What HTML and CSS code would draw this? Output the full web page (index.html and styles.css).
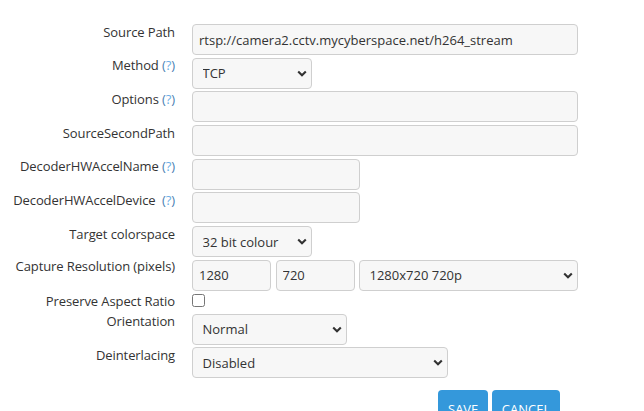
FILE: index.html
```html
<!DOCTYPE html>
<html lang="en">
<head>
<meta charset="utf-8">
<title>Source</title>
<link rel="stylesheet" href="styles.css">
</head>
<body>
<form class="form">
  <div class="grid">
    <label class="lbl">Source Path</label>
    <div class="ctl"><input class="field w-full" type="text" value="rtsp://camera2.cctv.mycyberspace.net/h264_stream"></div>

    <label class="lbl">Method <span class="help">(<b>?</b>)</span></label>
    <div class="ctl"><select class="field sel w-120"><option>TCP</option></select></div>

    <label class="lbl">Options <span class="help">(<b>?</b>)</span></label>
    <div class="ctl"><input class="field w-full" type="text" value=""></div>

    <label class="lbl">SourceSecondPath</label>
    <div class="ctl"><input class="field w-full" type="text" value=""></div>

    <label class="lbl">DecoderHWAccelName <span class="help">(<b>?</b>)</span></label>
    <div class="ctl"><input class="field w-168" type="text" value=""></div>

    <label class="lbl">DecoderHWAccelDevice&nbsp; <span class="help">(<b>?</b>)</span></label>
    <div class="ctl"><input class="field w-168" type="text" value=""></div>

    <label class="lbl">Target colorspace</label>
    <div class="ctl"><select class="field sel w-120"><option>32 bit colour</option></select></div>

    <label class="lbl lbl-tight">Capture Resolution (pixels)</label>
    <div class="ctl res">
      <input class="field w-79" type="text" value="1280">
      <input class="field w-79" type="text" value="720">
      <select class="field sel w-219"><option>1280x720 720p</option></select>
    </div>

    <label class="lbl">Preserve Aspect Ratio</label>
    <div class="ctl check-row"><span class="check"></span></div>

    <label class="lbl">Orientation</label>
    <div class="ctl"><select class="field sel w-155"><option>Normal</option></select></div>

    <label class="lbl">Deinterlacing</label>
    <div class="ctl"><select class="field sel w-256"><option>Disabled</option></select></div>
  </div>
  <div class="buttons">
    <button type="button" class="btn">Save</button>
    <button type="button" class="btn">Cancel</button>
  </div>
</form>
</body>
</html>
```

FILE: styles.css
```css
html, body {
  margin: 0;
  padding: 0;
  background: #ffffff;
  overflow: hidden;
}

body {
  font-family: "Open Sans", "Liberation Sans", sans-serif;
  font-size: 13px;
  color: #333333;
}

.form {
  padding-top: 24px;
}

.grid {
  display: grid;
  grid-template-columns: 175px auto;
  column-gap: 17px;
  row-gap: 2.7px;
  align-items: start;
}

.lbl {
  text-align: right;
  white-space: nowrap;
  line-height: 17.7px;
  margin-top: -0.3px;
  color: #333333;
  letter-spacing: -0.1px;
}

.lbl-tight {
  margin-top: -2px;
}

.help {
  color: #4a7fb3;
}

.help b {
  font-weight: normal;
  color: #6aaee6;
}

.ctl {
  display: flex;
  align-items: flex-start;
}

.res {
  gap: 4.5px;
}

.field {
  box-sizing: border-box;
  height: 31px;
  margin: 0;
  border: 1px solid #cfcfcf;
  border-radius: 4px;
  background-color: #f7f7f7;
  font-family: "Open Sans", "Liberation Sans", sans-serif;
  font-size: 13px;
  color: #333333;
  padding: 0 6px;
  outline: none;
}

.sel {
  -webkit-appearance: none;
  appearance: none;
  padding-left: 9.5px;
  padding-right: 20px;
  background-image: url("data:image/svg+xml;utf8,<svg xmlns='http://www.w3.org/2000/svg' width='10' height='7' viewBox='0 0 10 7'><path d='M1.2 1.4 L5 5.2 L8.8 1.4' fill='none' stroke='%23333' stroke-width='2.1'/></svg>");
  background-repeat: no-repeat;
  background-position: right 4px center;
  background-size: 10px 7px;
}

.w-full { width: 386px; }
.w-120 { width: 120px; }
.w-168 { width: 168px; }
.w-79 { width: 79px; }
.w-219 { width: 218.5px; }
.w-155 { width: 155px; }
.w-256 { width: 256px; }

.check-row {
  height: 17.6px;
}

.check {
  box-sizing: border-box;
  display: block;
  width: 13px;
  height: 13px;
  margin-top: 0.5px;
  border: 1px solid #767676;
  border-radius: 2.5px;
  background: #ffffff;
}

.buttons {
  display: flex;
  gap: 3.5px;
  padding-left: 438px;
  margin-top: 11.5px;
}

.btn {
  box-sizing: border-box;
  height: 36px;
  padding: 4px 10px 0;
  border: none;
  border-radius: 4px;
  background: #3498db;
  color: #ffffff;
  font-family: "Open Sans", "Liberation Sans", sans-serif;
  font-size: 13px;
  text-transform: uppercase;
  line-height: 17.7px;
}
```
